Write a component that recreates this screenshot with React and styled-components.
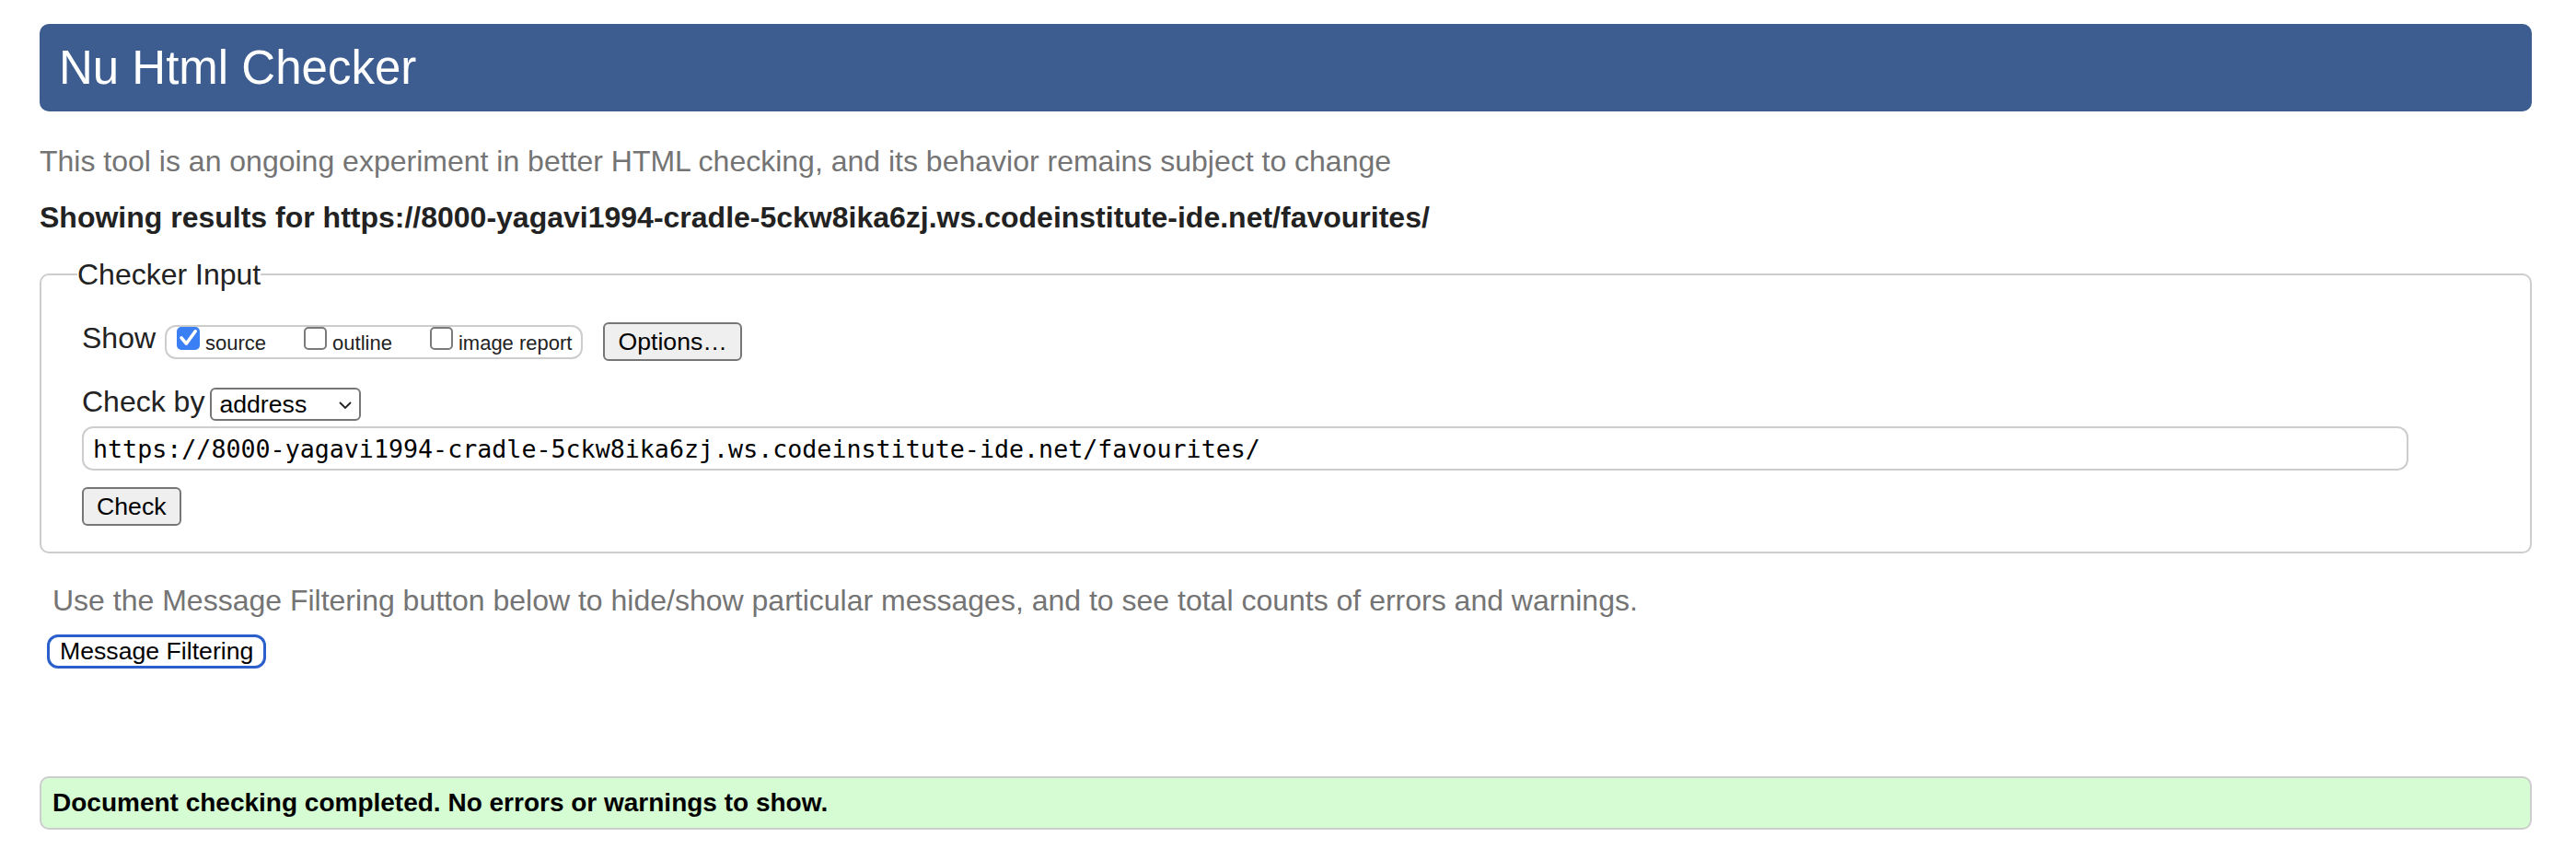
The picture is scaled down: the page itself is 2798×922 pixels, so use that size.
import React from 'react';
import styled, { createGlobalStyle } from 'styled-components';

const GlobalStyle = createGlobalStyle`
  body {
    margin: 0;
    background: #fff;
    font-family: 'Liberation Sans', Arial, Helvetica, sans-serif;
    color: #222;
  }
`;

const CHECK_URL =
  'https://8000-yagavi1994-cradle-5ckw8ika6zj.ws.codeinstitute-ide.net/favourites/';

const Checkbox = ({ checked }) => (
  <Box checked={checked}>
    {checked && (
      <svg width='25' height='25' viewBox='0 0 25 25'>
        <path
          d='M5 11.8 L10.3 18.2 L20.2 4.8'
          fill='none'
          stroke='#fff'
          strokeWidth='3.6'
          strokeLinecap='round'
          strokeLinejoin='round'
        />
      </svg>
    )}
  </Box>
);

const Chevron = () => (
  <svg width='14' height='8' viewBox='0 0 14 8'>
    <path d='M1 1 L7 7 L13 1' fill='none' stroke='#222' strokeWidth='1.8' />
  </svg>
);

const App = () => {
  return (
    <Page>
      <GlobalStyle />
      <Title>Nu Html Checker</Title>
      <Intro>
        This tool is an ongoing experiment in better HTML checking, and its
        behavior remains subject to change
      </Intro>
      <Results>Showing results for {CHECK_URL}</Results>

      <Fieldset>
        <Legend>Checker Input</Legend>
        <Row height='42px'>
          <Label lineHeight='34px'>Show</Label>
          <OptionGroup>
            <Option>
              <Checkbox checked />
              <OptionText>source</OptionText>
            </Option>
            <Option>
              <Checkbox />
              <OptionText>outline</OptionText>
            </Option>
            <Option>
              <Checkbox />
              <OptionText>image report</OptionText>
            </Option>
          </OptionGroup>
          <Button margin='0 0 0 22px'>Options…</Button>
        </Row>
        <Row height='36px' margin='29px 0 0 0'>
          <Label lineHeight='31px'>Check by</Label>
          <Select>
            <span>address</span>
            <Chevron />
          </Select>
        </Row>
        <Row height='48px' margin='6px 0 0 0'>
          <UrlInput>{CHECK_URL}</UrlInput>
        </Row>
        <Row height='42px' margin='18px 0 0 0'>
          <Button>Check</Button>
        </Row>
      </Fieldset>

      <Hint>
        Use the Message Filtering button below to hide/show particular
        messages, and to see total counts of errors and warnings.
      </Hint>
      <FilterButton>Message Filtering</FilterButton>

      <Success>Document checking completed. No errors or warnings to show.</Success>
    </Page>
  );
};

const Page = styled.div`
  padding: 26px 48px 0 43px;
`;

const Title = styled.h1`
  margin: 0;
  height: 95px;
  padding-left: 21px;
  background: #3d5d91;
  border-radius: 10px;
  color: #fff;
  font-size: 51px;
  font-weight: normal;
  line-height: 95px;
`;

const Intro = styled.p`
  margin: 34px 0 0;
  font-size: 32px;
  line-height: 40px;
  color: #747474;
`;

const Results = styled.p`
  margin: 21px 0 0;
  font-size: 32px;
  line-height: 40px;
  font-weight: bold;
  color: #222;
`;

const Fieldset = styled.fieldset`
  margin: 22px 0 0;
  padding: 32px 44px 28px 44px;
  border: 2px solid #cdcdcd;
  border-radius: 10px;
`;

const Legend = styled.legend`
  margin-left: -5px;
  padding: 0;
  font-size: 32px;
  line-height: 40px;
  color: #222;
`;

const Row = styled.div`
  display: flex;
  align-items: center;
  height: ${props => props.height};
  margin: ${props => (props.margin ? props.margin : 0)};
`;

const Label = styled.span`
  align-self: flex-start;
  font-size: 32px;
  line-height: ${props => props.lineHeight};
  color: #222;
`;

const OptionGroup = styled.div`
  display: flex;
  align-items: flex-start;
  box-sizing: border-box;
  height: 37px;
  margin-left: 10px;
  padding: 0 10px 0 11px;
  border: 2px solid #cdcdcd;
  border-radius: 12px;
`;

const Option = styled.label`
  display: flex;
  align-items: baseline;
  margin-right: 41px;
  &:last-child {
    margin-right: 0;
  }
`;

const Box = styled.span`
  display: block;
  box-sizing: border-box;
  width: 25px;
  height: 25px;
  border-radius: 5px;
  background: ${props => (props.checked ? '#3a7ff3' : '#fff')};
  border: ${props => (props.checked ? 'none' : '2px solid #7a7a7a')};
  svg {
    display: block;
  }
`;

const OptionText = styled.span`
  margin-left: 6px;
  font-size: 22px;
  line-height: 25px;
  color: #222;
`;

const Button = styled.button`
  box-sizing: border-box;
  height: 42px;
  margin: ${props => (props.margin ? props.margin : 0)};
  padding: 0 14px;
  background: #efefef;
  border: 2px solid #767676;
  border-radius: 6px;
  font-family: 'Liberation Sans', Arial, sans-serif;
  font-size: 26.67px;
  line-height: 38px;
  color: #000;
`;

const Select = styled.div`
  display: flex;
  align-items: center;
  justify-content: space-between;
  box-sizing: border-box;
  width: 164px;
  height: 36px;
  margin-left: 6px;
  padding: 0 8px 0 8px;
  border: 2px solid #767676;
  border-radius: 6px;
  font-size: 26.67px;
  line-height: 32px;
  color: #000;
  svg {
    margin-top: 1px;
  }
`;

const UrlInput = styled.div`
  box-sizing: border-box;
  width: 2527px;
  height: 48px;
  padding: 2px 10px 0;
  border: 2px solid #cdcdcd;
  border-radius: 12px;
  font-family: 'DejaVu Sans Mono', 'Liberation Mono', monospace;
  font-size: 26.67px;
  line-height: 42px;
  color: #000;
  white-space: nowrap;
`;

const Hint = styled.p`
  margin: 31px 0 0 14px;
  font-size: 32px;
  line-height: 40px;
  color: #747474;
`;

const FilterButton = styled.button`
  display: block;
  box-sizing: border-box;
  height: 37px;
  margin: 17px 0 0 8px;
  padding: 0 11px;
  background: #fff;
  border: 3px solid #2a5fcc;
  border-radius: 12px;
  font-family: 'Liberation Sans', Arial, sans-serif;
  font-size: 26.67px;
  line-height: 31px;
  color: #000;
`;

const Success = styled.div`
  box-sizing: border-box;
  height: 58px;
  margin-top: 117px;
  padding-left: 12px;
  background: #d6fcd3;
  border: 2px solid #cdcdcd;
  border-radius: 10px;
  font-size: 28px;
  font-weight: bold;
  line-height: 54px;
  color: #000;
`;

export default App;
